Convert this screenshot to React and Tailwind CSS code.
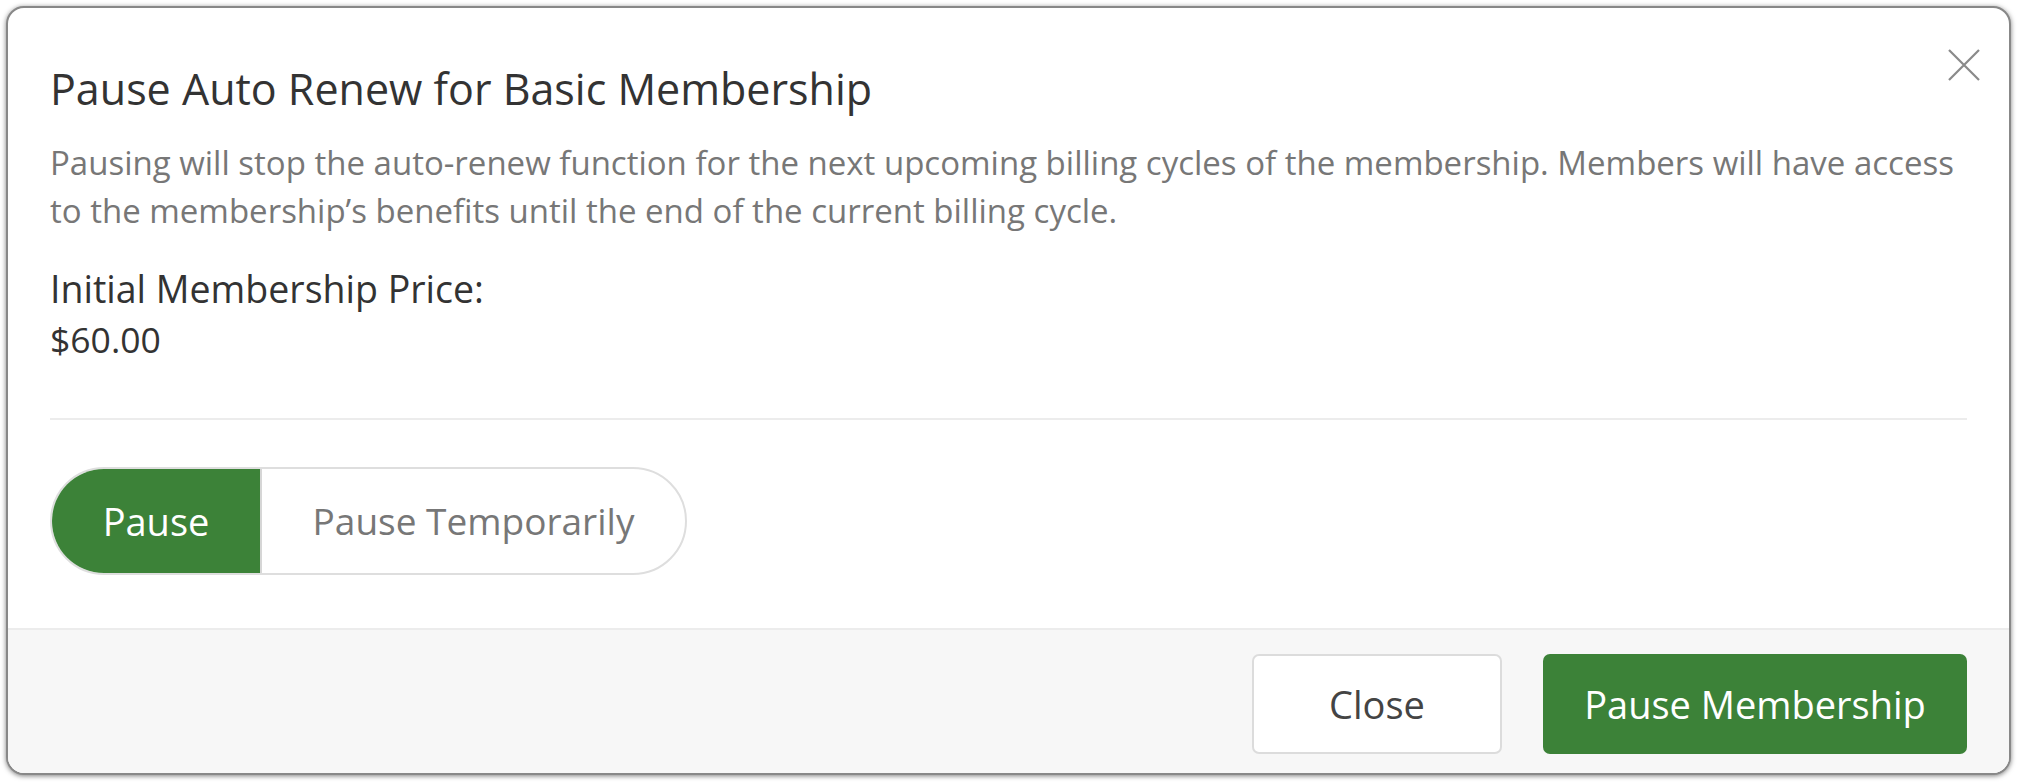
import React from "react";

const PauseDialog = () => {
  return (
    <div className="w-full min-h-screen bg-white p-[6px] font-['Open_Sans',sans-serif]">
      <div className="relative w-full h-[769px] flex flex-col overflow-hidden rounded-[18px] border-2 border-[#888888] bg-white shadow-[0_1px_5px_rgba(0,0,0,0.5)]">
        <button className="absolute top-[41px] right-[29px] w-[32px] h-[32px] text-[#8a8a8a]">
          <svg viewBox="0 0 32 32" className="w-full h-full" fill="none" stroke="currentColor" strokeWidth="2.2">
            <path d="M1 1L31 31M31 1L1 31" />
          </svg>
        </button>

        <div className="flex-1 px-[42px] pt-[56px]">
          <h2 className="text-[43px] leading-[50px] text-[#333333]">
            Pause Auto Renew for Basic Membership
          </h2>
          <p className="mt-[25px] text-[33px] leading-[48px] text-[#777777]">
            Pausing will stop the auto-renew function for the next upcoming billing cycles of the membership. Members will have access to the membership’s benefits until the end of the current billing cycle.
          </p>
          <div className="mt-[32px] text-[37.5px] leading-[44px] text-[#333333]">
            Initial Membership Price:
          </div>
          <div className="mt-[6px] text-[35.5px] leading-[44px] text-[#333333]">$60.00</div>

          <div className="mt-[57px] h-[2px] bg-[#ececec]"></div>

          <div className="mt-[47px] flex w-[637px] h-[108px] rounded-full border-2 border-[#dedede] overflow-hidden">
            <div className="w-[208px] flex items-center justify-center bg-[#3c8238] text-white text-[38px]">
              Pause
            </div>
            <div className="flex-1 flex items-center justify-center border-l-2 border-[#d6d6d6] text-[#777777] text-[37px]">
              Pause Temporarily
            </div>
          </div>
        </div>

        <div className="h-[145px] border-t-2 border-[#ececec] bg-[#f7f7f7] px-[42px] pt-[24px] flex justify-end gap-[41px]">
          <button className="w-[250px] h-[100px] rounded-[7px] border-2 border-[#dcdcdc] bg-white text-[38px] text-[#444444]">
            Close
          </button>
          <button className="w-[424px] h-[100px] rounded-[7px] bg-[#3c8238] text-[38px] text-white">
            Pause Membership
          </button>
        </div>
      </div>
    </div>
  );
};

export default function App() {
  return <PauseDialog />;
}
